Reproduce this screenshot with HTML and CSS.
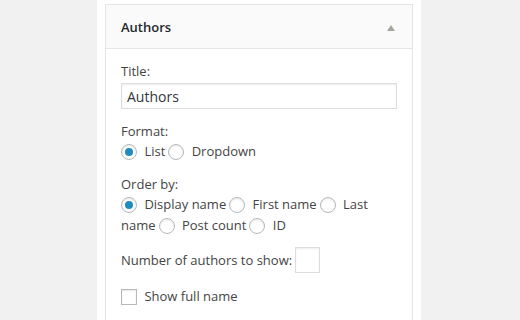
FILE: index.html
```html
<!DOCTYPE html>
<html>
<head>
<meta charset="utf-8">
<link rel="stylesheet" href="styles.css">
</head>
<body>
<div class="page">
  <div class="column">
    <div class="widget">
      <div class="widget-top">
        <h3 class="widget-title">Authors</h3>
        <svg class="toggle" width="8" height="6" viewBox="0 0 8 6"><polygon points="4,0 8,6 0,6" fill="#a4a89c"/></svg>
      </div>
      <div class="widget-inside">
        <div class="field">
          <label class="lbl">Title:</label>
          <input class="widefat" type="text" value="Authors">
        </div>
        <div class="field">
          <div class="lbl">Format:</div>
          <div class="opts"><input type="radio" class="radio" checked> <label>List</label><input type="radio" class="radio"> <label>Dropdown</label></div>
        </div>
        <div class="field">
          <div class="lbl">Order by:</div>
          <div class="opts"><input type="radio" class="radio" checked> <label>Display name</label><input type="radio" class="radio"> <label>First name</label><input type="radio" class="radio"> <label>Last name</label><input type="radio" class="radio"> <label>Post count</label><input type="radio" class="radio"> <label>ID</label></div>
        </div>
        <div class="field number-row">
          <label class="inline-lbl">Number of authors to show:</label><input type="text" class="small-num">
        </div>
        <div class="field check-row">
          <input type="checkbox" class="check"> <label>Show full name</label>
        </div>
      </div>
    </div>
  </div>
</div>
</body>
</html>
```

FILE: styles.css
```css
html, body {
  margin: 0;
  padding: 0;
  height: 100%;
}
body {
  background: #f1f1f1;
  font-family: "Open Sans", "Liberation Sans", sans-serif;
  font-size: 13px;
  color: #444;
  overflow: hidden;
}
.page {
  display: flex;
  justify-content: flex-start;
  height: 100%;
}
.column {
  margin-left: 97px;
  width: 324px;
  background: #fff;
  padding: 4px 8px 0 8px;
  box-sizing: border-box;
  height: 100%;
}
.widget {
  border: 1px solid #e5e5e5;
  background: #fff;
  width: 308px;
  box-sizing: border-box;
  height: 400px;
}
.widget-top {
  background: #fafafa;
  border-bottom: 1px solid #e5e5e5;
  height: 43px;
  display: flex;
  align-items: center;
  justify-content: space-between;
  padding: 0 17px 0 15px;
}
.widget-title {
  margin: 0;
  font-size: 13px;
  font-weight: 600;
  line-height: 1;
  color: #23282d;
  padding-top: 1px;
}
.toggle {
  display: block;
  margin-top: 2px;
}
.widget-inside {
  padding: 0 15px;
}
.field {
  margin-top: 13px;
}
.lbl {
  display: block;
  line-height: 19px;
}
.widefat {
  display: block;
  box-sizing: border-box;
  width: 100%;
  height: 26px;
  margin: 2px 0 0 0;
  padding: 0 5px;
  border: 1px solid #ddd;
  box-shadow: inset 0 1px 2px rgba(0,0,0,.07);
  font-family: "Open Sans", "Liberation Sans", sans-serif;
  font-size: 14px;
  color: #32373c;
  outline: none;
}
.opts {
  line-height: 21px;
}
.radio, .check {
  -webkit-appearance: none;
  appearance: none;
  box-sizing: border-box;
  width: 16px;
  height: 16px;
  margin: 0 4px 0 3px;
  padding: 0;
  border: 1px solid #b4b9be;
  background: #fff;
  box-shadow: inset 0 1px 2px rgba(0,0,0,.1);
  vertical-align: -4px;
  display: inline-block;
  position: relative;
  outline: none;
}
.opts .radio:first-child {
  margin-left: 0;
}
.radio {
  border-radius: 50%;
}
.radio:checked::before {
  content: "";
  position: absolute;
  left: 3px;
  top: 3px;
  width: 8px;
  height: 8px;
  border-radius: 50%;
  background: #1e8cbe;
}
.number-row {
  display: flex;
  align-items: center;
  margin-top: 11px;
}
.inline-lbl {
  margin-right: 3px;
}
.small-num {
  box-sizing: border-box;
  width: 25px;
  height: 26px;
  margin: 0;
  padding: 0 3px;
  border: 1px solid #ddd;
  box-shadow: inset 0 1px 2px rgba(0,0,0,.07);
  outline: none;
}
.check-row {
  line-height: 21px;
}
.check {
  margin-left: 0;
}
```
